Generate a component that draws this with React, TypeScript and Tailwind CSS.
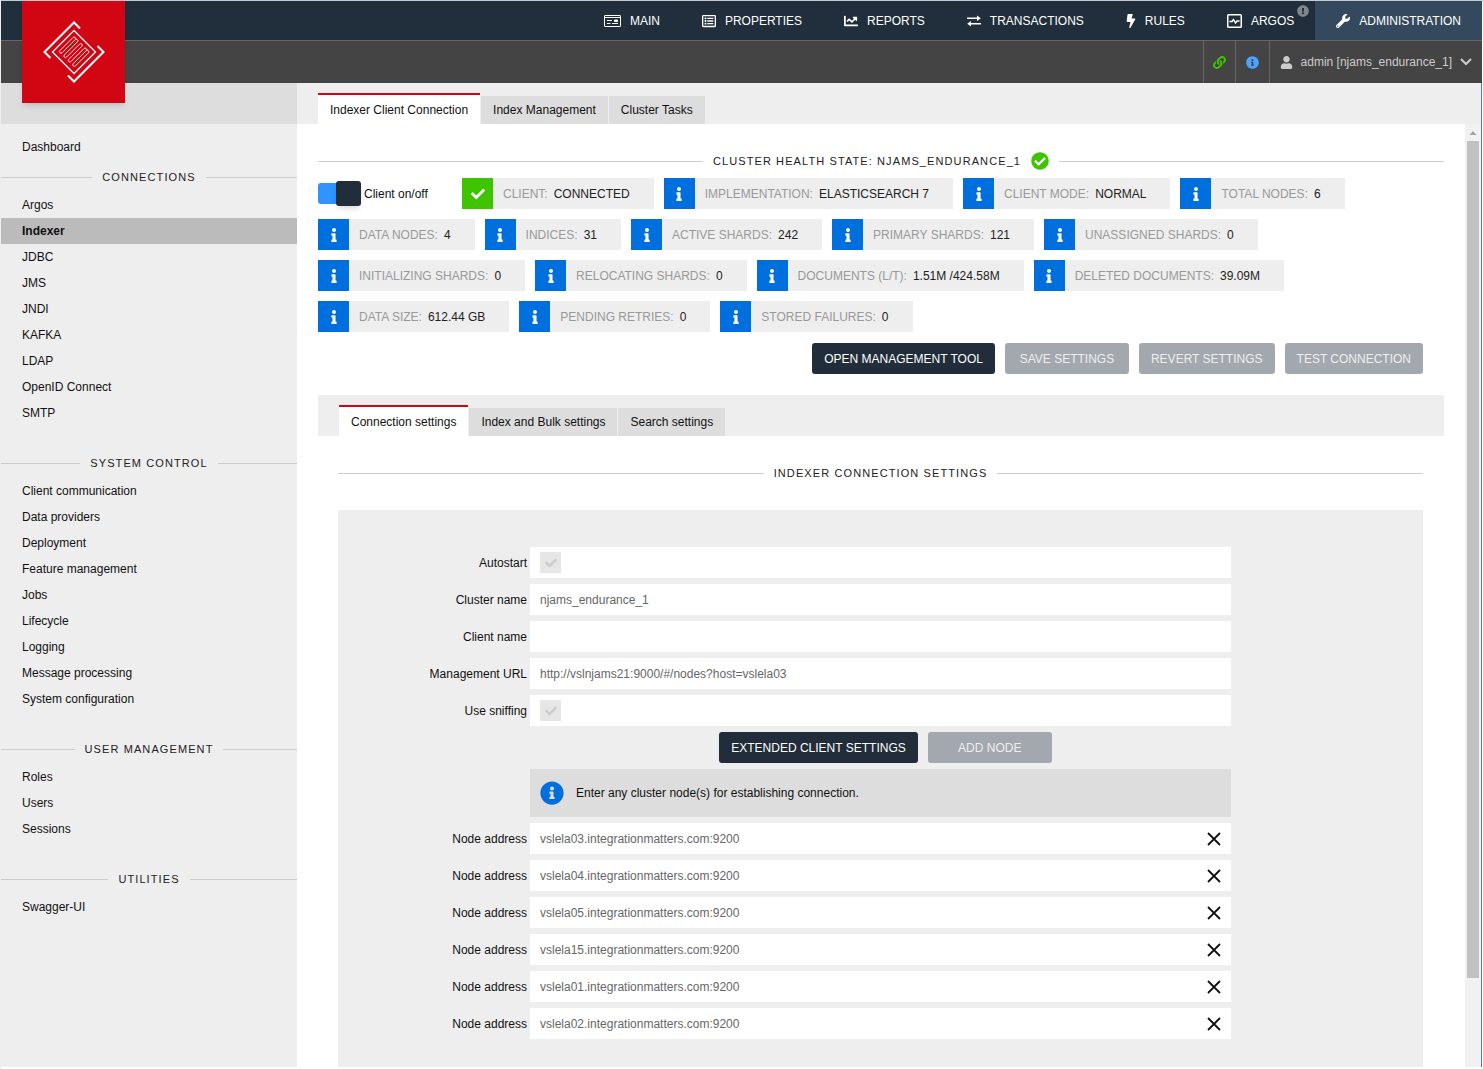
import React, { useState } from 'react';
import {
  FaBolt,
  FaChartLine,
  FaCheck,
  FaCheckCircle,
  FaExclamationCircle,
  FaInfo,
  FaInfoCircle,
  FaLink,
  FaRegListAlt,
  FaUser,
  FaWrench,
} from 'react-icons/fa';
import { clsx } from 'clsx';

interface NavItem {
  label: string;
  icon: React.ReactNode;
  badge?: boolean;
  active?: boolean;
}

interface MenuSection {
  title: string;
  items: string[];
}

interface Stat {
  label: string;
  value: string;
  ok?: boolean;
}

function Logo() {
  return (
    <svg viewBox="0 0 62 62" className="h-[62px] w-[62px]" fill="none" stroke="#fff">
      <path d="M7.5 37 1.5 31 31 1.5l6 6" strokeWidth="2" />
      <path d="m54.5 25 6 6L31 60.5l-6-6" strokeWidth="2" />
      <path d="M31 9.500 52.500 31 31 52.500 9.500 31Z" strokeWidth="1.3" />
      <path
        d="M30 16.500l-13 13a1.550 1.550 0 0 0 2.200 2.200l13-13a1.550 1.550 0 0 1 2.200 2.200l-13 13a1.550 1.550 0 0 0 2.200 2.200l13-13a1.550 1.550 0 0 1 2.200 2.200l-13 13a1.550 1.550 0 0 0 2.200 2.200l13-13a1.550 1.550 0 0 1 2.200 2.200l-13 13a1.550 1.550 0 0 0 2.200 2.200l13-13a1.550 1.550 0 0 0-2.200-2.200M30 16.500a1.550 1.550 0 0 1 2.200 2.200"
        strokeWidth="0.9"
      />
    </svg>
  );
}

function MainIcon() {
  return (
    <svg viewBox="0 0 17 12" className="h-3 w-[17px]" fill="none" stroke="currentColor">
      <rect x="0.5" y="0.5" width="16" height="11" rx="0.5" />
      <path d="M1 2.500h15M3 5.500h5M3 8.500h3.500M8 8.500h6" />
      <path d="M10.500 5h3v1.500h-3z" fill="currentColor" />
    </svg>
  );
}

function TransactionsIcon() {
  return (
    <svg viewBox="0 0 14 12" className="h-3 w-3.5" fill="currentColor">
      <path d="M0 2.500h10V.5l3.800 2.800-3.800 2.800V4.100H0zM14 7.900H4V5.900L.2 8.700 4 11.500V9.500h10z" />
    </svg>
  );
}

function ArgosIcon() {
  return (
    <svg viewBox="0 0 15 14" className="h-3.5 w-[15px]" fill="none" stroke="currentColor" strokeWidth="1.5">
      <rect x="0.75" y="0.75" width="13.5" height="12.5" rx="0.8" />
      <path d="M2.500 7.500H5L6.500 5.500l2 3.500L10 7h2.500" />
    </svg>
  );
}

const navItems: NavItem[] = [
  { label: 'MAIN', icon: <MainIcon /> },
  { label: 'PROPERTIES', icon: <FaRegListAlt className="h-3.5 w-3.5" /> },
  { label: 'REPORTS', icon: <FaChartLine className="h-3.5 w-3.5" /> },
  { label: 'TRANSACTIONS', icon: <TransactionsIcon /> },
  { label: 'RULES', icon: <FaBolt className="h-3.5 w-2.5" /> },
  { label: 'ARGOS', icon: <ArgosIcon />, badge: true },
  { label: 'ADMINISTRATION', icon: <FaWrench className="h-3.5 w-3.5" />, active: true },
];

const sections: MenuSection[] = [
  {
    title: 'CONNECTIONS',
    items: ['Argos', 'Indexer', 'JDBC', 'JMS', 'JNDI', 'KAFKA', 'LDAP', 'OpenID Connect', 'SMTP'],
  },
  {
    title: 'SYSTEM CONTROL',
    items: [
      'Client communication',
      'Data providers',
      'Deployment',
      'Feature management',
      'Jobs',
      'Lifecycle',
      'Logging',
      'Message processing',
      'System configuration',
    ],
  },
  { title: 'USER MANAGEMENT', items: ['Roles', 'Users', 'Sessions'] },
  { title: 'UTILITIES', items: ['Swagger-UI'] },
];

const stats: Stat[] = [
  { label: 'CLIENT', value: 'CONNECTED', ok: true },
  { label: 'IMPLEMENTATION', value: 'ELASTICSEARCH 7' },
  { label: 'CLIENT MODE', value: 'NORMAL' },
  { label: 'TOTAL NODES', value: '6' },
  { label: 'DATA NODES', value: '4' },
  { label: 'INDICES', value: '31' },
  { label: 'ACTIVE SHARDS', value: '242' },
  { label: 'PRIMARY SHARDS', value: '121' },
  { label: 'UNASSIGNED SHARDS', value: '0' },
  { label: 'INITIALIZING SHARDS', value: '0' },
  { label: 'RELOCATING SHARDS', value: '0' },
  { label: 'DOCUMENTS (L/T)', value: '1.51M /424.58M' },
  { label: 'DELETED DOCUMENTS', value: '39.09M' },
  { label: 'DATA SIZE', value: '612.44 GB' },
  { label: 'PENDING RETRIES', value: '0' },
  { label: 'STORED FAILURES', value: '0' },
];

const initialNodes = ['03', '04', '05', '15', '01', '02'].map(n => `vslela${n}.integrationmatters.com:9200`);

function Heading({ children }: { children: React.ReactNode }) {
  return (
    <div className="flex h-[30px] items-center gap-2.5 text-[11px] tracking-widest text-[#222]">
      <span className="h-px flex-1 bg-[#ccc]" />
      <h2 className="flex items-center gap-2.5">{children}</h2>
      <span className="h-px flex-1 bg-[#ccc]" />
    </div>
  );
}

function Tabs({ labels }: { labels: string[] }) {
  const [active, setActive] = useState(0);
  return (
    <div role="tablist" className="flex h-[41px] items-end gap-px bg-[#eee] px-[21px]">
      {labels.map((label, i) => (
        <button
          key={label}
          role="tab"
          aria-selected={i === active}
          onClick={() => setActive(i)}
          className={clsx(
            'px-3',
            i === active ? 'h-[31px] border-t-2 border-[#d20513] bg-white' : 'h-[28px] bg-[#ddd]'
          )}
        >
          {label}
        </button>
      ))}
    </div>
  );
}

function ActionButton({ children, disabled }: { children: React.ReactNode; disabled?: boolean }) {
  return (
    <button
      disabled={disabled}
      className={clsx(
        'h-[31px] min-w-[124px] rounded-[3px] px-3 font-medium',
        disabled ? 'bg-[#a3a8af] text-[#eee]' : 'bg-[#212d3a] text-white'
      )}
    >
      {children}
    </button>
  );
}

function StatChip({ stat }: { stat: Stat }) {
  return (
    <div className="flex h-[31px] items-center bg-[#eee] pr-6">
      <span
        className={clsx(
          'mr-2.5 flex h-[31px] w-[31px] items-center justify-center text-white',
          stat.ok ? 'bg-[#3fc400]' : 'bg-[#006fde]'
        )}
      >
        {stat.ok ? <FaCheck className="h-3.5 w-3.5" /> : <FaInfo className="h-3.5 w-3.5" />}
      </span>
      <span className="mr-1.5 text-[#999]">{stat.label}:</span>
      <span className="text-[#222]">{stat.value}</span>
    </div>
  );
}

function FieldRow({ id, label, children }: { id: string; label: string; children: React.ReactNode }) {
  return (
    <div className="grid grid-cols-[192px_1fr_192px]">
      <label htmlFor={id} className="self-center pr-[3px] text-right">
        {label}
      </label>
      <div className="flex h-[31px] items-center bg-white">{children}</div>
    </div>
  );
}

function TextField({ id, value }: { id: string; value: string }) {
  return <input id={id} defaultValue={value} className="h-full min-w-0 flex-1 px-2.5 text-[#666] outline-none" />;
}

function CheckField({ id }: { id: string }) {
  return (
    <span className="ml-2.5 grid h-[21px] w-[21px] place-items-center bg-[#e6e6e6]">
      <input
        id={id}
        type="checkbox"
        defaultChecked
        disabled
        className="col-start-1 row-start-1 h-[21px] w-[21px] appearance-none"
      />
      <FaCheck className="pointer-events-none col-start-1 row-start-1 h-3 w-3 text-[#ccc]" />
    </span>
  );
}

function Header() {
  return (
    <header>
      <nav className="flex h-[39px] justify-end bg-[#212f3c] text-white">
        {navItems.map(item => (
          <a
            key={item.label}
            href="#"
            className={clsx('relative flex items-center gap-[9px] px-[21px]', item.active && 'bg-[#34495e]')}
          >
            {item.icon}
            {item.label}
            {item.badge && <FaExclamationCircle className="absolute top-1 right-1.5 h-3 w-3 text-[#7f878e]" />}
          </a>
        ))}
      </nav>
      <div className="flex h-[43px] justify-end border-t border-[#666] bg-[#444] text-[#ccc]">
        <button aria-label="Connection state" className="flex w-8 items-center justify-center border-l border-[#666]">
          <FaLink className="h-[13px] w-[13px] text-[#3fc400]" />
        </button>
        <button aria-label="Information" className="flex w-[34px] items-center justify-center border-l border-[#666]">
          <FaInfoCircle className="h-[13px] w-[13px] text-[#4da3ff]" />
        </button>
        <button className="flex items-center gap-2 border-l border-[#666] px-2.5">
          <FaUser className="h-[13px] w-[13px]" />
          admin [njams_endurance_1]
          <svg viewBox="0 0 12 8" className="h-2 w-3" fill="none" stroke="currentColor" strokeWidth="2">
            <path d="m1 1 5 5 5-5" />
          </svg>
        </button>
      </div>
    </header>
  );
}

function Sidebar() {
  const [selected, setSelected] = useState('Indexer');
  return (
    <aside className="w-[296px] shrink-0 bg-[#eee]">
      <div className="h-[41px] bg-[#ddd]" />
      <nav className="pt-2.5">
        <a href="#" className="block px-[21px] leading-[26px]">
          Dashboard
        </a>
        <div className="flex flex-col gap-[22px] pt-0.5">
          {sections.map(section => (
            <section key={section.title}>
              <Heading>{section.title}</Heading>
              <ul>
                {section.items.map(item => (
                  <li key={item}>
                    <a
                      href="#"
                      onClick={() => setSelected(item)}
                      className={clsx('block px-[21px] leading-[26px]', item === selected && 'bg-[#bbb] font-bold')}
                    >
                      {item}
                    </a>
                  </li>
                ))}
              </ul>
            </section>
          ))}
        </div>
      </nav>
    </aside>
  );
}

function ClientSwitch() {
  const [on, setOn] = useState(true);
  return (
    <label className="flex h-[31px] w-[134px] items-center gap-[3px]">
      <input type="checkbox" checked={on} onChange={e => setOn(e.target.checked)} className="peer sr-only" />
      <span
        className={clsx(
          'flex h-[21px] w-[43px] items-center rounded-[3px]',
          on ? 'justify-end bg-[#3094ff]' : 'justify-start bg-[#bbb]'
        )}
      >
        <span className="h-[25px] w-[25px] shrink-0 rounded-[3px] bg-[#212d3a] shadow-md" />
      </span>
      Client on/off
    </label>
  );
}

function ConnectionForm() {
  const [nodes, setNodes] = useState(initialNodes);
  return (
    <form className="flex flex-1 flex-col gap-1.5 bg-[#eee] pt-[37px] pb-[26px]" onSubmit={e => e.preventDefault()}>
      <FieldRow id="autostart" label="Autostart">
        <CheckField id="autostart" />
      </FieldRow>
      <FieldRow id="cluster" label="Cluster name">
        <TextField id="cluster" value="njams_endurance_1" />
      </FieldRow>
      <FieldRow id="client" label="Client name">
        <TextField id="client" value="" />
      </FieldRow>
      <FieldRow id="url" label="Management URL">
        <TextField id="url" value="http://vslnjams21:9000/#/nodes?host=vslela03" />
      </FieldRow>
      <FieldRow id="sniffing" label="Use sniffing">
        <CheckField id="sniffing" />
      </FieldRow>
      <div className="flex justify-center gap-2.5 pl-2.5">
        <ActionButton>EXTENDED CLIENT SETTINGS</ActionButton>
        <ActionButton disabled>ADD NODE</ActionButton>
      </div>
      <p className="mx-[192px] flex h-12 items-center gap-3 bg-[#ddd] px-2.5">
        <FaInfoCircle className="h-6 w-6 text-[#006fde]" />
        Enter any cluster node(s) for establishing connection.
      </p>
      {nodes.map((node, i) => (
        <FieldRow key={node} id={`node-${i}`} label="Node address">
          <TextField id={`node-${i}`} value={node} />
          <button
            type="button"
            aria-label="Remove node"
            onClick={() => setNodes(nodes.filter(n => n !== node))}
            className="mr-2.5"
          >
            <svg viewBox="0 0 14 14" className="h-3.5 w-3.5" fill="none" stroke="#111" strokeWidth="1.8">
              <path d="m1 1 12 12M13 1 1 13" />
            </svg>
          </button>
        </FieldRow>
      ))}
    </form>
  );
}

function Scrollbar() {
  return (
    <div className="flex w-4 shrink-0 flex-col items-center bg-[#f1f1f1]">
      <div className="h-[41px] w-full bg-[#eee]" />
      <svg viewBox="0 0 16 17" className="h-[17px] w-4" fill="#a3a3a3">
        <path d="M4.500 11 8 7l3.500 4z" />
      </svg>
      <div className="h-[837px] w-3 bg-[#c1c1c1]" />
    </div>
  );
}

export default function App() {
  return (
    <div className="relative flex min-h-screen flex-col border-t border-l border-t-[#c3ccd0] border-l-[#eee] bg-white pr-px pb-0.5 font-['Liberation_Sans',Arial,sans-serif] text-xs text-[#111]">
      <Header />
      <a
        href="#"
        aria-label="Home"
        className="absolute top-0 left-[21px] flex h-[102px] w-[103px] items-center justify-center bg-[#d20513] shadow-md"
      >
        <Logo />
      </a>
      <div className="flex flex-1 border-r border-[#4f81a8]">
        <Sidebar />
        <div className="flex min-w-0 flex-1">
          <main className="flex flex-1 flex-col">
            <Tabs labels={['Indexer Client Connection', 'Index Management', 'Cluster Tasks']} />
            <div className="flex flex-1 flex-col px-[21px] pt-[22px]">
              <Heading>
                CLUSTER HEALTH STATE: NJAMS_ENDURANCE_1
                <FaCheckCircle className="h-[18px] w-[18px] text-[#3fc400]" />
              </Heading>
              <div className="mt-0.5 flex flex-wrap gap-2.5">
                <ClientSwitch />
                {stats.map(stat => (
                  <StatChip key={stat.label} stat={stat} />
                ))}
              </div>
              <div className="flex justify-end gap-2.5 px-[21px] pt-[11px] pb-[21px]">
                <ActionButton>OPEN MANAGEMENT TOOL</ActionButton>
                <ActionButton disabled>SAVE SETTINGS</ActionButton>
                <ActionButton disabled>REVERT SETTINGS</ActionButton>
                <ActionButton disabled>TEST CONNECTION</ActionButton>
              </div>
              <Tabs labels={['Connection settings', 'Index and Bulk settings', 'Search settings']} />
              <div className="flex flex-1 flex-col gap-[22px] pt-[22px] pr-[21px] pl-5">
                <Heading>INDEXER CONNECTION SETTINGS</Heading>
                <ConnectionForm />
              </div>
            </div>
          </main>
          <Scrollbar />
        </div>
      </div>
    </div>
  );
}
